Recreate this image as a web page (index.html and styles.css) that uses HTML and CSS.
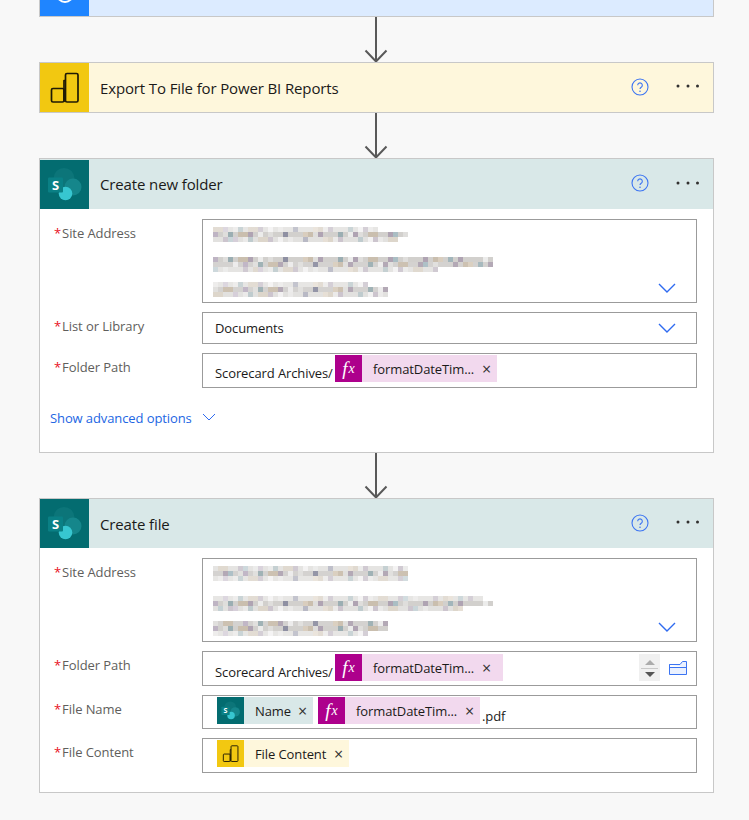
FILE: index.html
```html
<!DOCTYPE html>
<html lang="en">
<head>
<meta charset="utf-8">
<title>Flow editor</title>
<link rel="stylesheet" href="styles.css">
</head>
<body>
<svg class="defs" width="0" height="0" aria-hidden="true">
  <symbol id="sp-bg" viewBox="0 0 49 49">
    <rect width="49" height="49" fill="#036c70"/>
    <circle cx="24" cy="18.500" r="10.500" fill="#0c7579"/>
    <circle cx="33" cy="27" r="8.500" fill="#15868b"/>
    <circle cx="25.500" cy="33.500" r="6.800" fill="#37c6d0"/>
    <rect x="8" y="17.500" width="15" height="15" rx="1" fill="#0a8085"/>
  </symbol>
  <symbol id="pbi" viewBox="0 0 49 49">
    <rect width="49" height="49" fill="#f2c811"/>
    <g fill="none" stroke="#1f1a05" stroke-width="1.700" stroke-linejoin="round">
      <rect x="25.500" y="10.500" width="12.500" height="28.500" rx="1.500"/>
      <rect x="11.500" y="25.500" width="12.500" height="13.500" rx="1.500"/>
      <path d="M24 39V17.500h1.500"/>
    </g>
  </symbol>
  <symbol id="help" viewBox="0 0 18 18">
    <circle cx="9" cy="9" r="8" fill="none" stroke="#3b74f2" stroke-width="1.100"/>
    <path d="M6.700 7.200a2.300 2.300 0 1 1 3.500 2c-.8.5-1.200.9-1.200 1.900" fill="none" stroke="#3b74f2" stroke-width="1.100"/>
    <circle cx="9" cy="13.200" r=".8" fill="#3b74f2"/>
  </symbol>
  <symbol id="more" viewBox="0 0 24 4">
    <circle cx="2" cy="2" r="1.500" fill="#323130"/>
    <circle cx="12" cy="2" r="1.500" fill="#323130"/>
    <circle cx="21.500" cy="2" r="1.500" fill="#323130"/>
  </symbol>
  <symbol id="chev" viewBox="0 0 18 10">
    <path d="M1 1l8 8 8-8" fill="none" stroke="#2f6bf0" stroke-width="1.400"/>
  </symbol>
  <symbol id="arrow" viewBox="0 0 24 45">
    <path d="M12 0v44M1.500 33.500L12 44.500 22.500 33.500" fill="none" stroke="#595959" stroke-width="2"/>
  </symbol>
</svg>

<main class="canvas">
  <section class="card card-cut">
    <header class="head head-blue"><div class="blue-icon"><span class="ring"></span></div></header>
  </section>
  <svg class="arrow"><use href="#arrow"/></svg>

  <section class="card">
    <header class="head head-yellow">
      <svg class="icon"><use href="#pbi"/></svg>
      <h2 class="title">Export To File for Power BI Reports</h2>
      <svg class="help"><use href="#help"/></svg>
      <svg class="more"><use href="#more"/></svg>
    </header>
  </section>
  <svg class="arrow"><use href="#arrow"/></svg>

  <section class="card">
    <header class="head head-teal">
      <svg class="icon" viewBox="0 0 49 49"><use href="#sp-bg"/><text x="15.500" y="29.500" class="sp-s">S</text></svg>
      <h2 class="title">Create new folder</h2>
      <svg class="help"><use href="#help"/></svg>
      <svg class="more"><use href="#more"/></svg>
    </header>
    <div class="body">
      <div class="row">
        <label class="label"><span class="req">*</span>Site Address</label>
        <div class="input input-site">
          <div class="mosaic" aria-hidden="true">
            <div class="m-line"><i class="m a w1a"></i><i class="m b w1"></i><i class="m c w1b"></i></div>
            <div class="m-line"><i class="m b w2"></i><i class="m d w2"></i><i class="m e w2c"></i></div>
            <div class="m-line"><i class="m a w3a"></i><i class="m d w3"></i><i class="m c w3"></i></div>
          </div>
          <svg class="chev chev-end"><use href="#chev"/></svg>
        </div>
      </div>
      <div class="row">
        <label class="label"><span class="req">*</span>List or Library</label>
        <div class="input input-list"><span class="value">Documents</span><svg class="chev"><use href="#chev"/></svg></div>
      </div>
      <div class="row">
        <label class="label"><span class="req">*</span>Folder Path</label>
        <div class="input input-token">
          <span class="plain">Scorecard Archives/</span>
          <span class="token token-fx"><span class="fx"><i>f</i><i>x</i></span><span class="tk-text">formatDateTim...</span><span class="tk-x">×</span></span>
        </div>
      </div>
      <a class="advanced">Show advanced options<svg class="adv-chev" viewBox="0 0 14 8"><path d="M1 1l6 6 6-6" fill="none" stroke="#2f6bf0" stroke-width="1"/></svg></a>
    </div>
  </section>
  <svg class="arrow"><use href="#arrow"/></svg>

  <section class="card">
    <header class="head head-teal head-short">
      <svg class="icon" viewBox="0 0 49 49"><use href="#sp-bg"/><text x="15.500" y="29.500" class="sp-s">S</text></svg>
      <h2 class="title">Create file</h2>
      <svg class="help"><use href="#help"/></svg>
      <svg class="more"><use href="#more"/></svg>
    </header>
    <div class="body body-last">
      <div class="row">
        <label class="label"><span class="req">*</span>Site Address</label>
        <div class="input input-site">
          <div class="mosaic" aria-hidden="true">
            <div class="m-line"><i class="m e w1"></i><i class="m d w1"></i><i class="m a w1"></i></div>
            <div class="m-line"><i class="m a w2a"></i><i class="m b w2"></i><i class="m c w2b"></i></div>
            <div class="m-line"><i class="m d w3"></i><i class="m b w3"></i><i class="m a w3a"></i></div>
          </div>
          <svg class="chev chev-end"><use href="#chev"/></svg>
        </div>
      </div>
      <div class="row">
        <label class="label"><span class="req">*</span>Folder Path</label>
        <div class="input input-token input-stepper">
          <span class="plain">Scorecard Archives/</span>
          <span class="token token-fx"><span class="fx"><i>f</i><i>x</i></span><span class="tk-text">formatDateTim...</span><span class="tk-x">×</span></span>
          <span class="stepper"><span class="tri-up"></span><span class="step-line"></span><span class="tri-down"></span></span>
          <svg class="folder" viewBox="0 0 18 14"><path d="M.5 3.500h10.500l2.500-3h4v13H.5zM.5 3.500v3h17" fill="#eaf1ff" stroke="#3b74f2" stroke-width="1"/></svg>
        </div>
      </div>
      <div class="row">
        <label class="label"><span class="req">*</span>File Name</label>
        <div class="input input-tokens">
          <span class="token token-sp"><svg class="tk-icon" viewBox="0 0 49 49"><use href="#sp-bg"/><text x="15.500" y="29.500" class="sp-s">S</text></svg><span class="tk-text">Name</span><span class="tk-x">×</span></span>
          <span class="token token-fx token-fx2"><span class="fx"><i>f</i><i>x</i></span><span class="tk-text">formatDateTim...</span><span class="tk-x">×</span></span>
          <span class="suffix">.pdf</span>
        </div>
      </div>
      <div class="row">
        <label class="label"><span class="req">*</span>File Content</label>
        <div class="input input-tokens input-content">
          <span class="token token-pbi"><svg class="tk-icon"><use href="#pbi"/></svg><span class="tk-text">File Content</span><span class="tk-x">×</span></span>
        </div>
      </div>
    </div>
  </section>
</main>
</body>
</html>
```

FILE: styles.css
```css
* { box-sizing: border-box; }
html, body { margin: 0; height: 100%; }
body {
  background: #f8f8f8;
  font-family: "Open Sans", "Noto Sans", sans-serif;
  color: #201f1e;
  overflow: hidden;
}
.defs { position: absolute; }
.canvas {
  width: 749px;
  padding-left: 39px;
  display: flex;
  flex-direction: column;
}
.card {
  width: 675px;
  border: 1px solid #c8c8c8;
  background: #fff;
  flex: none;
}
.card-cut { height: 17px; border-top: 0; overflow: hidden; }
.arrow { width: 24px; height: 45px; margin-left: 325px; display: block; flex: none; }
.head {
  height: 49px;
  display: flex;
  align-items: center;
}
.head-blue { height: 16px; background: #dcebff; align-items: flex-end; }
.head-yellow { background: #fef7dc; }
.head-teal { background: #d9e8e8; height: 50px; }
.head-teal .title { margin-top: 0; }
.head-short { height: 49px; }
.head-short .title { margin-top: 1px; }
.blue-icon {
  width: 49px;
  height: 16px;
  background: #1f85ff;
  overflow: hidden;
  display: flex;
  justify-content: center;
}
.ring {
  width: 18px;
  height: 18px;
  border: 2.500px solid #fff;
  border-radius: 50%;
  margin-top: -15px;
}
.icon { width: 49px; height: 49px; flex: none; display: block; }
.title {
  margin: 1px 0 0 11px;
  font-size: 15px;
  font-weight: 400;
  color: #1b1a19;
  flex: 1;
  letter-spacing: -.13px;
}
.help { width: 18px; height: 18px; margin-right: 27px; margin-top: -2px; flex: none; }
.more { width: 24px; height: 4px; margin-right: 13px; margin-top: -3px; flex: none; }
.sp-s { font: 700 13px "Open Sans", sans-serif; fill: #fff; text-anchor: middle; }

.body {
  padding: 10px 16px 21px 14px;
  display: flex;
  flex-direction: column;
  gap: 9px;
}
.body-last { padding-bottom: 19px; }
.row { display: flex; }
.label {
  width: 148px;
  flex: none;
  font-size: 13px;
  letter-spacing: -.08px;
  color: #605e5c;
  line-height: 17px;
  padding-top: 6px;
}
.req { color: #e81123; margin-right: 1px; }
.input {
  flex: 1;
  border: 1px solid #9b9b9b;
  background: #fff;
  display: flex;
  min-width: 0;
  font-size: 13px;
  letter-spacing: -.1px;
  color: #1b1a19;
}
.input-site { height: 84px; padding: 7px 0 0 10px; }
.input-list { height: 32px; align-items: center; padding-left: 12px; }
.input-token { height: 35px; padding: 0 0 0 12px; }
.input-tokens { height: 34px; padding: 0 0 0 14px; }
.input-content { height: 35px; }
.input-stepper { padding-top: 1px; }
.value { flex: 1; }
.plain { align-self: flex-end; line-height: 17px; padding-bottom: 5px; white-space: nowrap; width: 120px; }
.input-stepper .plain { padding-bottom: 4px; }
.chev { width: 18px; height: 10px; margin-right: 20px; flex: none; }
.chev-end { margin-left: auto; align-self: flex-end; margin-bottom: 9px; }
.mosaic { display: flex; flex-direction: column; gap: 15px; }
.m-line { display: flex; flex-direction: column; height: 15px; }
.mosaic .m-line:last-child { margin-top: -5px; }
.m {
  display: block;
  height: 5px;
  background-color: #d0cecb;
  background-image:
    repeating-linear-gradient(90deg, rgba(120,95,135,.42) 0 5px, transparent 5px 35px),
    repeating-linear-gradient(90deg, transparent 0 15px, rgba(70,120,135,.42) 15px 20px, transparent 20px 55px),
    repeating-linear-gradient(90deg, transparent 0 25px, rgba(190,165,130,.45) 25px 35px, transparent 35px 65px),
    repeating-linear-gradient(90deg, rgba(255,255,255,.6) 0 5px, transparent 5px 10px, rgba(255,255,255,.3) 10px 15px, transparent 15px 45px);
}
.a { opacity: .5; background-position-x: 10px; }
.b { opacity: .95; background-position-x: 0; }
.c { opacity: .6; background-position-x: 20px; }
.d { opacity: .9; background-position-x: 30px; }
.e { opacity: .55; background-position-x: 45px; }
.w1 { width: 195px; }
.w1a { width: 165px; }
.w1b { width: 185px; }
.w2 { width: 280px; }
.w2a { width: 270px; }
.w2b { width: 250px; }
.w2c { width: 225px; }
.w3 { width: 175px; }
.w3a { width: 155px; }

.token {
  display: inline-flex;
  align-items: center;
  height: 27px;
  margin-top: 1px;
  font-size: 13px;
  color: #1b1a19;
  white-space: nowrap;
  letter-spacing: -.1px;
}
.token-fx { background: #f2d9ee; width: 162px; }
.token-fx2 { width: 162px; margin-left: 5px; }
.input-stepper .token-fx { width: 168px; }
.input-stepper .tk-x { margin-right: 12px; }
.token-sp { background: #d9e8e8; width: 96px; }
.token-pbi { background: #fef7dc; width: 132px; }
.fx {
  width: 27px;
  height: 27px;
  background: #ad008c;
  color: #fff;
  font: italic 17px "Liberation Serif", serif;
  display: flex;
  align-items: center;
  justify-content: center;
  flex: none;
}
.fx i:first-child { font-size: 19px; margin-right: 1px; }
.fx i:last-child { font-size: 14px; }
.tk-icon { width: 27px; height: 27px; flex: none; }
.tk-text { margin-left: 11px; }
.tk-x { margin-left: auto; margin-right: 6px; font-size: 16px; line-height: 1; color: #323130; }
.suffix { align-self: flex-end; line-height: 17px; padding: 0 0 3px 2px; }
.stepper {
  margin-left: auto;
  margin-top: 1px;
  width: 21px;
  height: 27px;
  background: #f0f0f0;
  display: flex;
  flex-direction: column;
  align-items: center;
  padding-top: 6px;
  flex: none;
}
.tri-up { border: 5px solid transparent; border-top: 0; border-bottom: 5px solid #ababab; }
.step-line { width: 17px; height: 1px; background: #c8c8c8; margin: 3px 0; }
.tri-down { border: 5px solid transparent; border-bottom: 0; border-top: 5px solid #555; }
.folder { width: 18px; height: 14px; margin: 8px 9px 0 9px; flex: none; }
.advanced {
  display: flex;
  align-items: center;
  margin: 8px 0 0 -4px;
  height: 26px;
  font-size: 13px;
  letter-spacing: -.1px;
  color: #2266e3;
}
.adv-chev { width: 14px; height: 8px; margin-left: 10px; margin-top: -2px; }
```
